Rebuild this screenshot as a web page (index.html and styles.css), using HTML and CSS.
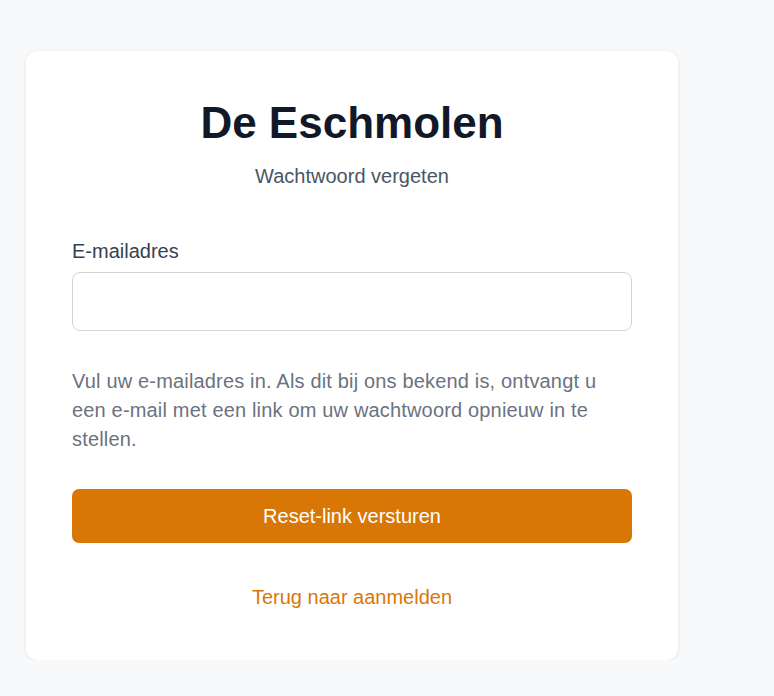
FILE: index.html
```html
<!DOCTYPE html>
<html lang="nl">
<head>
<meta charset="utf-8">
<title>Wachtwoord vergeten - De Eschmolen</title>
<link rel="stylesheet" href="styles.css">
</head>
<body>
<main class="page">
  <section class="card">
    <header class="card-head">
      <h1 class="title">De Eschmolen</h1>
      <p class="subtitle">Wachtwoord vergeten</p>
    </header>
    <form class="form">
      <label class="label" for="email">E-mailadres</label>
      <input class="input" id="email" type="email">
      <p class="help">Vul uw e-mailadres in. Als dit bij ons bekend is, ontvangt u een e-mail met een link om uw wachtwoord opnieuw in te stellen.</p>
      <button class="button" type="button">Reset-link versturen</button>
    </form>
    <div class="back"><a class="link" href="#">Terug naar aanmelden</a></div>
  </section>
</main>
</body>
</html>
```
FILE: styles.css
```css
html, body {
  margin: 0;
  padding: 0;
  background: #f8f9fb;
  font-family: "Liberation Sans", Arial, sans-serif;
}
.page {
  padding: 51px 0 0 26px;
}
.card {
  width: 652px;
  box-sizing: border-box;
  background: #ffffff;
  border-radius: 12px;
  box-shadow: 0 1px 4px rgba(0, 0, 0, 0.08);
  padding: 46px 46px 49px;
}
.card-head {
  text-align: center;
}
.title {
  margin: 0;
  font-size: 44px;
  line-height: 52px;
  font-weight: 700;
  color: #111827;
}
.subtitle {
  margin: 13px 0 0;
  font-size: 20px;
  line-height: 28px;
  color: #4b5563;
}
.form {
  display: flex;
  flex-direction: column;
  margin-top: 47px;
}
.label {
  font-size: 20px;
  line-height: 28px;
  color: #374151;
}
.input {
  margin-top: 7px;
  height: 59px;
  box-sizing: border-box;
  border: 1px solid #d1d5db;
  border-radius: 8px;
  background: #fff;
  font-size: 18px;
  padding: 0 14px;
}
.help {
  margin: 36px 0 0;
  font-size: 20px;
  letter-spacing: 0.17px;
  line-height: 29px;
  color: #6b7280;
}
.button {
  margin-top: 35px;
  height: 54px;
  border: none;
  border-radius: 7px;
  background: #d97706;
  color: #ffffff;
  font-family: inherit;
  font-size: 20px;
}
.back {
  margin-top: 40px;
  text-align: center;
}
.link {
  color: #d97706;
  text-decoration: none;
  font-size: 20px;
  line-height: 28px;
}
```
